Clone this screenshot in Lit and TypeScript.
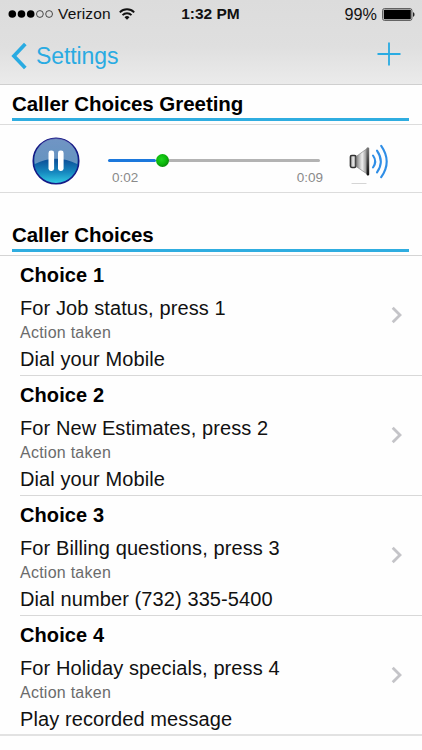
import {html, css, svg, LitElement} from 'lit';
import {customElement, property} from 'lit/decorators.js';

interface Choice {
    title: string;
    prompt: string;
    action: string;
}

const CHOICES: Choice[] = [
    {title: 'Choice 1', prompt: 'For Job status, press 1', action: 'Dial your Mobile'},
    {title: 'Choice 2', prompt: 'For New Estimates, press 2', action: 'Dial your Mobile'},
    {title: 'Choice 3', prompt: 'For Billing questions, press 3', action: 'Dial number (732) 335-5400'},
    {title: 'Choice 4', prompt: 'For Holiday specials, press 4', action: 'Play recorded message'}
];

@customElement('status-bar')
class StatusBar extends LitElement {
    static styles = css`
        :host {
            display: grid;
            grid-template-columns: 1fr auto 1fr;
            align-items: center;
            height: 28px;
            padding: 0 7px 0 8px;
            font-size: 15.5px;
            color: #111;
        }
        .carrier, .battery {
            display: flex;
            align-items: center;
        }
        .battery {
            justify-content: flex-end;
            font-size: 16.2px;
        }
        .name {
            margin: 0 8px 0 4px;
            letter-spacing: .15px;
        }
        .time {
            margin-right: 2px;
            font-weight: bold;
            font-size: 15.5px;
        }
        .percent {
            margin-right: 5px;
        }
        svg {
            display: block;
        }
    `;
    render() {
        return html`
        <div class="carrier">
            <svg width="46" height="10" viewBox="0 0 46 10">
                ${[4.3, 13.5, 22.7].map((x) => svg`<circle cx="${x}" cy="5" r="3.8" fill="#000"/>`)}
                ${[31.9, 41.1].map((x) => svg`<circle cx="${x}" cy="5" r="3.4" fill="none" stroke="#222" stroke-width=".8"/>`)}
            </svg>
            <span class="name">Verizon</span>
            <svg width="16" height="12" viewBox="0 0 16 12" fill="none" stroke="#111" stroke-width="1.9">
                <path d="M.8 4.3a10.2 10.2 0 0 1 14.4 0M3.5 7.1a6.4 6.4 0 0 1 9 0"/>
                <path d="M8 11.8L5.5 9.3a3.6 3.6 0 0 1 5 0z" fill="#111" stroke="none"/>
            </svg>
        </div>
        <div class="time">1:32 PM</div>
        <div class="battery">
            <span class="percent">99%</span>
            <svg width="33" height="13" viewBox="0 0 33 13">
                <rect x=".6" y=".6" width="29.3" height="11.8" rx="1.8" fill="none" stroke="#555" stroke-width="1"/>
                <rect x="1.8" y="1.8" width="27" height="9.4" rx=".8" fill="#000"/>
                <path d="M31 4.2c2 .5 2 4.1 0 4.6z" fill="#222"/>
            </svg>
        </div>
        `;
    }
}

@customElement('nav-bar')
class NavBar extends LitElement {
    static styles = css`
        :host {
            display: flex;
            align-items: center;
            justify-content: space-between;
            height: 56px;
            padding: 0 21px 0 11px;
            color: #29abe2;
        }
        .back {
            display: flex;
            align-items: center;
            gap: 9px;
            font-size: 23px;
            letter-spacing: -.1px;
        }
        .plus {
            margin-top: -4px;
        }
        svg {
            display: block;
        }
    `;
    render() {
        return html`
        <div class="back">
            <svg width="16" height="28" viewBox="0 0 16 28" fill="none" stroke="currentColor" stroke-width="3.7">
                <path d="M14.3 2L2.9 14l11.4 12"/>
            </svg>
            <span>Settings</span>
        </div>
        <svg class="plus" width="24" height="24" viewBox="0 0 24 24" stroke="currentColor" stroke-width="1.8">
            <path d="M.5 12h23M12 .5v23"/>
        </svg>
        `;
    }
}

@customElement('audio-player')
class AudioPlayer extends LitElement {
    @property({type: Number}) elapsed = 0;
    @property({type: Number}) duration = 0;
    static styles = css`
        :host {
            display: flex;
            align-items: flex-start;
            height: 67px;
            border-bottom: 1px solid #dcdcdc;
            padding-left: 32px;
        }
        svg {
            display: block;
        }
        .pause {
            margin-top: 12px;
        }
        .slider {
            width: 212px;
            margin: 28px 0 0 28px;
        }
        .track {
            display: flex;
            align-items: center;
            height: 14px;
        }
        .played, .rest {
            height: 3px;
            border-radius: 1.5px;
        }
        .played {
            padding-right: 1px;
            background: #1c78dc;
        }
        .rest {
            flex: 1;
            background: #b3b3b3;
        }
        .knob {
            width: 13px;
            height: 13px;
            margin-right: -1px;
            border-radius: 50%;
            background: radial-gradient(circle at 42% 40%, #1fd51f 0, #0cb80c 45%, #078007 80%, #3c8c3c 100%);
            z-index: 1;
        }
        .times {
            display: flex;
            justify-content: space-between;
            margin: 3px -3px 0 4px;
            font-size: 13.5px;
            line-height: 15px;
            color: #8a8a8a;
        }
        .volume {
            margin: 18px 0 0 28px;
        }
    `;
    _time(seconds: number) {
        return `${Math.floor(seconds / 60)}:${String(seconds % 60).padStart(2, '0')}`;
    }
    render() {
        return html`
        <svg class="pause" width="48" height="48" viewBox="0 0 48 48">
            <defs>
                <linearGradient id="ball" x1="0" y1="0" x2="0" y2="1">
                    <stop offset="0" stop-color="#3568ab"/>
                    <stop offset=".5" stop-color="#0d559c"/>
                    <stop offset=".75" stop-color="#1689c0"/>
                    <stop offset="1" stop-color="#35cfe6"/>
                </linearGradient>
                <linearGradient id="gloss" x1="0" y1="0" x2="0" y2="1">
                    <stop offset="0" stop-color="#fff" stop-opacity=".3"/>
                    <stop offset="1" stop-color="#fff" stop-opacity=".38"/>
                </linearGradient>
            </defs>
            <circle cx="24" cy="24" r="22.8" fill="url(#ball)" stroke="#151a86" stroke-width="1.5"/>
            <path d="M2.8 27a21.6 21.6 0 1 1 42.4 0Q24 16.5 2.8 27z" fill="url(#gloss)"/>
            <g fill="#fff">
                <rect x="16.5" y="13.5" width="5.6" height="20.5" rx="2.4"/>
                <rect x="26" y="13.5" width="5.6" height="20.5" rx="2.4"/>
            </g>
        </svg>
        <div class="slider">
            <div class="track">
                <div class="played" style="width: ${this.elapsed / this.duration * 100}%"></div>
                <div class="knob"></div>
                <div class="rest"></div>
            </div>
            <div class="times">
                <span>${this._time(this.elapsed)}</span>
                <span>${this._time(this.duration)}</span>
            </div>
        </div>
        <svg class="volume" width="42" height="42" viewBox="0 0 42 42">
            <defs>
                <linearGradient id="cone" x1="0" y1="0" x2="1" y2="0">
                    <stop offset="0" stop-color="#888"/>
                    <stop offset=".5" stop-color="#eee"/>
                    <stop offset="1" stop-color="#777"/>
                </linearGradient>
                <linearGradient id="edge" x1="0" y1="0" x2="0" y2="1">
                    <stop offset="0" stop-color="#777"/>
                    <stop offset="1" stop-color="#111"/>
                </linearGradient>
            </defs>
            <rect x="2.4" y="12.4" width="5.6" height="12" rx="1.4" fill="url(#cone)" stroke="#333" stroke-width="1.5"/>
            <path d="M8.6 13.2L19.8 5v26.5L8.6 23.8z" fill="url(#cone)" stroke="#777" stroke-width=".6"/>
            <rect x="18.6" y="4.6" width="2.6" height="27.8" rx=".8" fill="url(#edge)"/>
            <g fill="none" stroke="#2f8ee6" stroke-width="2.1" stroke-linecap="round">
                <path d="M25 12.5q4.4 6 0 12"/>
                <path d="M29 7.6q7.6 10.9 0 21.8"/>
                <path d="M33.2 2.8q11 15.7 0 31.4"/>
            </g>
            <path d="M4 40.5h14" stroke="#d5d5d5" stroke-width="1.2" stroke-linecap="round"/>
        </svg>
        `;
    }
}

@customElement('choice-row')
class ChoiceRow extends LitElement {
    @property({attribute: false}) choice!: Choice;
    static styles = css`
        :host {
            display: flex;
            align-items: center;
            justify-content: space-between;
            box-sizing: border-box;
            height: 120px;
            padding: 2px 19px 0 0;
            font-size: 20px;
            color: #111;
        }
        .title {
            font-size: 20px;
            font-weight: bold;
            line-height: 24px;
            margin-bottom: 9px;
            letter-spacing: .1px;
            color: #000;
        }
        .line {
            line-height: 24px;
            letter-spacing: .1px;
        }
        .label {
            margin-top: 1px;
            font-size: 16px;
            line-height: 24px;
            letter-spacing: .25px;
            color: #6b6b6b;
        }
        .action {
            margin-top: 2px;
        }
        svg {
            margin-bottom: 3px;
        }
    `;
    render() {
        return html`
        <div>
            <div class="title">${this.choice.title}</div>
            <div class="line">${this.choice.prompt}</div>
            <div class="label">Action taken</div>
            <div class="line action">${this.choice.action}</div>
        </div>
        <svg width="12" height="18" viewBox="0 0 12 18" fill="none" stroke="#c4c4c8" stroke-width="2.8">
            <path d="M1.7 1.7L9 9l-7.3 7.3"/>
        </svg>
        `;
    }
}

@customElement('app-root')
class AppRoot extends LitElement {
    static styles = css`
        :host {
            display: block;
            box-sizing: border-box;
            height: 750px;
            overflow: hidden;
            background: #fefefe;
            font-family: "Liberation Sans", Arial, sans-serif;
        }
        header {
            background: linear-gradient(#dcdcdc 0, #dfdfdf 55%, #ebebeb 100%);
            border-bottom: 1px solid #cfcfcf;
        }
        h2 {
            box-sizing: border-box;
            height: 36px;
            margin: 0 13px 0 12px;
            padding-top: 7px;
            border-bottom: 3px solid #2fade0;
            font-size: 20.5px;
            line-height: 24px;
            letter-spacing: -.05px;
            color: #000;
        }
        .player {
            margin-top: 3px;
            border-top: 1px solid #dcdcdc;
        }
        .second {
            margin-top: 23px;
        }
        .choices {
            margin-top: 3px;
            border-top: 1px solid #d4d4d4;
            border-bottom: 2px solid #e2e2e2;
        }
        choice-row {
            margin-left: 20px;
            border-bottom: 1px solid #d8d8d8;
        }
        choice-row:last-child {
            height: 118px;
            padding-top: 3px;
            border-bottom: none;
        }
    `;
    render() {
        return html`
        <header>
            <status-bar></status-bar>
            <nav-bar></nav-bar>
        </header>
        <h2>Caller Choices Greeting</h2>
        <div class="player">
            <audio-player .elapsed="${2}" .duration="${9}"></audio-player>
        </div>
        <h2 class="second">Caller Choices</h2>
        <div class="choices">
            ${CHOICES.map((choice) => html`<choice-row .choice="${choice}"></choice-row>`)}
        </div>
        `;
    }
}
